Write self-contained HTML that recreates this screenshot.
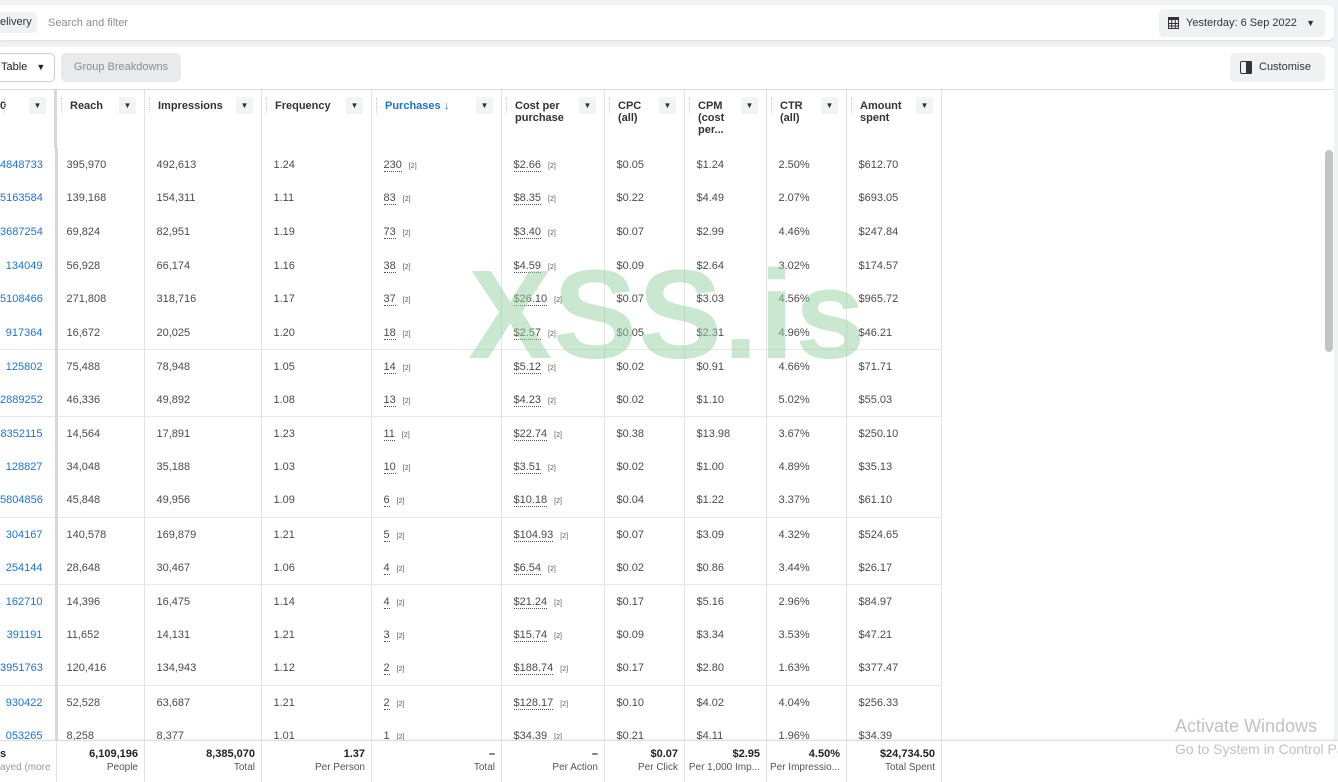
<!DOCTYPE html><html><head><meta charset="utf-8"><style>
*{box-sizing:border-box;margin:0;padding:0}
body{width:1338px;height:782px;overflow:hidden;background:#f0f2f5;font-family:"Liberation Sans",Arial,sans-serif;font-size:11px;color:#444;position:relative}
.card1{position:absolute;left:0;top:5px;width:1334px;height:35px;background:#fff;border-radius:0 6px 6px 0;box-shadow:0 1px 2px rgba(0,0,0,.1)}
.card2{position:absolute;left:0;top:47px;width:1334px;height:735px;background:#fff;border-radius:0 6px 0 0}
.pill{position:absolute;background:#f0f1f3;border-radius:5px;color:#333}
table{position:absolute;left:0;width:941px;border-collapse:collapse;table-layout:fixed}
td{height:33.6px;padding:0 0 0 12px;border-right:1px solid #e3e3e3;white-space:nowrap;vertical-align:middle;color:#4b4b4b;font-size:11px;overflow:hidden}
td:nth-child(2){padding-left:9px}
td.c0{color:#1a73d9;padding-left:0;text-align:right;padding-right:12px;border-right:3px solid #d8d8d8}
tr.l td{border-bottom:1px solid #e8e8e8}
u{text-decoration:none;border-bottom:1px dotted #555}
i{font-style:normal;font-size:7px;margin-left:7px;color:#555}
.hd{position:absolute;top:90px;height:58px;border-right:1px solid #e3e3e3;font-size:11px;font-weight:bold;color:#333;padding:10px 0 0 13px;line-height:12px}
.hd b{position:absolute;right:8px;top:7px;width:17px;height:17px;background:#f2f3f4;font-size:8px;text-align:center;line-height:17px;color:#333}
.hd:before{content:"";position:absolute;left:4px;top:8px;height:16px;border-left:1px dotted #ccc}
.ft{position:absolute;top:741px;height:41px;border-right:1px solid #e3e3e3;text-align:right;padding:7px 6px 0 0;line-height:13px;white-space:nowrap;overflow:hidden}
.ft b{display:block;font-size:11px;color:#222}
.ft span{font-size:10px;color:#555}
</style></head><body>
<div class="card1">
<div class="pill" style="left:-6px;top:7px;width:43px;height:21px;line-height:21px;padding-left:6px;font-size:11px">elivery</div>
<div style="position:absolute;left:48px;top:12px;color:#8a8d91;font-size:11px">Search and filter</div>
<div class="pill" style="left:1159px;top:4px;width:166px;height:28px;line-height:28px;padding-left:27px;font-size:11px">Yesterday: 6 Sep 2022
<svg style="position:absolute;left:9px;top:8px" width="11" height="12" viewBox="0 0 11 12"><rect x="0.5" y="0.5" width="10" height="11" fill="none" stroke="#333"/><rect x="0" y="0" width="11" height="3" fill="#333"/><path d="M0 6.5H11M0 9H11M3.7 3V12M7.3 3V12" stroke="#333"/></svg>
<span style="position:absolute;right:10px;top:0;font-size:9px">▼</span></div>
</div>
<div class="card2"></div>
<div style="position:absolute;left:-6px;top:53px;width:61px;height:29px;border:1px solid #ccd0d5;border-radius:5px;background:#fff;line-height:27px;padding-left:6px;color:#222">Table <span style="font-size:9px;margin-left:6px">▼</span></div>
<div class="pill" style="left:61px;top:53px;width:120px;height:29px;line-height:29px;text-align:center;color:#8a8d91;background:#e9eaec">Group Breakdowns</div>
<div class="pill" style="left:1230px;top:53px;width:95px;height:29px;line-height:29px;padding-left:29px;color:#333">Customise
<svg style="position:absolute;left:10px;top:8px" width="12" height="13" viewBox="0 0 12 13"><rect x="0.5" y="0.5" width="11" height="12" rx="1.5" fill="none" stroke="#333"/><rect x="6" y="0" width="6" height="13" rx="1.5" fill="#333"/></svg></div>
<div style="position:absolute;left:0;top:89px;width:1334px;border-top:1px solid #ddd"></div>

<div class="hd" style="left:0;width:57px;border-right:3px solid #d8d8d8;padding-left:0">0<b>▼</b></div>
<div class="hd" style="left:57px;width:88px">Reach<b>▼</b></div>
<div class="hd" style="left:145px;width:117px">Impressions<b>▼</b></div>
<div class="hd" style="left:262px;width:110px">Frequency<b>▼</b></div>
<div class="hd" style="left:372px;width:130px;color:#1a73d9">Purchases ↓<b>▼</b></div>
<div class="hd" style="left:502px;width:103px">Cost per<br>purchase<b>▼</b></div>
<div class="hd" style="left:605px;width:80px">CPC<br>(all)<b>▼</b></div>
<div class="hd" style="left:685px;width:82px">CPM<br>(cost<br>per...<b>▼</b></div>
<div class="hd" style="left:767px;width:80px">CTR<br>(all)<b>▼</b></div>
<div class="hd" style="left:847px;width:95px">Amount<br>spent<b>▼</b></div>

<table style="top:148px">
<colgroup><col style="width:56px"><col style="width:88px"><col style="width:117px"><col style="width:110px"><col style="width:130px"><col style="width:103px"><col style="width:80px"><col style="width:82px"><col style="width:80px"><col style="width:95px"></colgroup>
<tr><td class="c0">4848733</td><td>395,970</td><td>492,613</td><td>1.24</td><td><u>230</u><i>[2]</i></td><td><u>$2.66</u><i>[2]</i></td><td>$0.05</td><td>$1.24</td><td>2.50%</td><td>$612.70</td></tr>
<tr><td class="c0">5163584</td><td>139,168</td><td>154,311</td><td>1.11</td><td><u>83</u><i>[2]</i></td><td><u>$8.35</u><i>[2]</i></td><td>$0.22</td><td>$4.49</td><td>2.07%</td><td>$693.05</td></tr>
<tr><td class="c0">3687254</td><td>69,824</td><td>82,951</td><td>1.19</td><td><u>73</u><i>[2]</i></td><td><u>$3.40</u><i>[2]</i></td><td>$0.07</td><td>$2.99</td><td>4.46%</td><td>$247.84</td></tr>
<tr><td class="c0">134049</td><td>56,928</td><td>66,174</td><td>1.16</td><td><u>38</u><i>[2]</i></td><td><u>$4.59</u><i>[2]</i></td><td>$0.09</td><td>$2.64</td><td>3.02%</td><td>$174.57</td></tr>
<tr><td class="c0">5108466</td><td>271,808</td><td>318,716</td><td>1.17</td><td><u>37</u><i>[2]</i></td><td><u>$26.10</u><i>[2]</i></td><td>$0.07</td><td>$3.03</td><td>4.56%</td><td>$965.72</td></tr>
<tr class="l"><td class="c0">917364</td><td>16,672</td><td>20,025</td><td>1.20</td><td><u>18</u><i>[2]</i></td><td><u>$2.57</u><i>[2]</i></td><td>$0.05</td><td>$2.31</td><td>4.96%</td><td>$46.21</td></tr>
<tr><td class="c0">125802</td><td>75,488</td><td>78,948</td><td>1.05</td><td><u>14</u><i>[2]</i></td><td><u>$5.12</u><i>[2]</i></td><td>$0.02</td><td>$0.91</td><td>4.66%</td><td>$71.71</td></tr>
<tr class="l"><td class="c0">2889252</td><td>46,336</td><td>49,892</td><td>1.08</td><td><u>13</u><i>[2]</i></td><td><u>$4.23</u><i>[2]</i></td><td>$0.02</td><td>$1.10</td><td>5.02%</td><td>$55.03</td></tr>
<tr><td class="c0">8352115</td><td>14,564</td><td>17,891</td><td>1.23</td><td><u>11</u><i>[2]</i></td><td><u>$22.74</u><i>[2]</i></td><td>$0.38</td><td>$13.98</td><td>3.67%</td><td>$250.10</td></tr>
<tr><td class="c0">128827</td><td>34,048</td><td>35,188</td><td>1.03</td><td><u>10</u><i>[2]</i></td><td><u>$3.51</u><i>[2]</i></td><td>$0.02</td><td>$1.00</td><td>4.89%</td><td>$35.13</td></tr>
<tr class="l"><td class="c0">5804856</td><td>45,848</td><td>49,956</td><td>1.09</td><td><u>6</u><i>[2]</i></td><td><u>$10.18</u><i>[2]</i></td><td>$0.04</td><td>$1.22</td><td>3.37%</td><td>$61.10</td></tr>
<tr><td class="c0">304167</td><td>140,578</td><td>169,879</td><td>1.21</td><td><u>5</u><i>[2]</i></td><td><u>$104.93</u><i>[2]</i></td><td>$0.07</td><td>$3.09</td><td>4.32%</td><td>$524.65</td></tr>
<tr class="l"><td class="c0">254144</td><td>28,648</td><td>30,467</td><td>1.06</td><td><u>4</u><i>[2]</i></td><td><u>$6.54</u><i>[2]</i></td><td>$0.02</td><td>$0.86</td><td>3.44%</td><td>$26.17</td></tr>
<tr><td class="c0">162710</td><td>14,396</td><td>16,475</td><td>1.14</td><td><u>4</u><i>[2]</i></td><td><u>$21.24</u><i>[2]</i></td><td>$0.17</td><td>$5.16</td><td>2.96%</td><td>$84.97</td></tr>
<tr><td class="c0">391191</td><td>11,652</td><td>14,131</td><td>1.21</td><td><u>3</u><i>[2]</i></td><td><u>$15.74</u><i>[2]</i></td><td>$0.09</td><td>$3.34</td><td>3.53%</td><td>$47.21</td></tr>
<tr class="l"><td class="c0">3951763</td><td>120,416</td><td>134,943</td><td>1.12</td><td><u>2</u><i>[2]</i></td><td><u>$188.74</u><i>[2]</i></td><td>$0.17</td><td>$2.80</td><td>1.63%</td><td>$377.47</td></tr>
<tr><td class="c0">930422</td><td>52,528</td><td>63,687</td><td>1.21</td><td><u>2</u><i>[2]</i></td><td><u>$128.17</u><i>[2]</i></td><td>$0.10</td><td>$4.02</td><td>4.04%</td><td>$256.33</td></tr>
<tr><td class="c0">053265</td><td>8,258</td><td>8,377</td><td>1.01</td><td><u>1</u><i>[2]</i></td><td><u>$34.39</u><i>[2]</i></td><td>$0.21</td><td>$4.11</td><td>1.96%</td><td>$34.39</td></tr>
</table>
<div style="position:absolute;left:0;top:740px;width:1338px;height:42px;background:#fff;border-top:1px solid #ddd;box-shadow:0 -1px 2px rgba(0,0,0,.05)"></div>
<div class="ft" style="left:0;width:57px;text-align:left;padding-left:0;color:#999"><b>s</b><span style="color:#999">ayed (more</span></div>
<div class="ft" style="left:57px;width:88px"><b>6,109,196</b><span>People</span></div>
<div class="ft" style="left:145px;width:117px"><b>8,385,070</b><span>Total</span></div>
<div class="ft" style="left:262px;width:110px"><b>1.37</b><span>Per Person</span></div>
<div class="ft" style="left:372px;width:130px"><b>–</b><span>Total</span></div>
<div class="ft" style="left:502px;width:103px"><b>–</b><span>Per Action</span></div>
<div class="ft" style="left:605px;width:80px"><b>$0.07</b><span>Per Click</span></div>
<div class="ft" style="left:685px;width:82px"><b>$2.95</b><span>Per 1,000 Imp...</span></div>
<div class="ft" style="left:767px;width:80px"><b>4.50%</b><span>Per Impressio...</span></div>
<div class="ft" style="left:847px;width:95px"><b>$24,734.50</b><span>Total Spent</span></div>
<div style="position:absolute;left:1325px;top:150px;width:8px;height:202px;background:#c4c4c4;border-radius:4px"></div>
<div style="position:absolute;left:468px;top:250px;font-size:126px;font-weight:bold;color:rgba(150,210,160,.5);letter-spacing:1px;line-height:130px">XSS.is</div>
<div style="position:absolute;left:1175px;top:716px;font-size:18px;color:#c2c2c2;white-space:nowrap">Activate Windows</div>
<div style="position:absolute;left:1175px;top:741px;font-size:14px;color:#c2c2c2;white-space:nowrap">Go to System in Control Panel</div>
</body></html>
